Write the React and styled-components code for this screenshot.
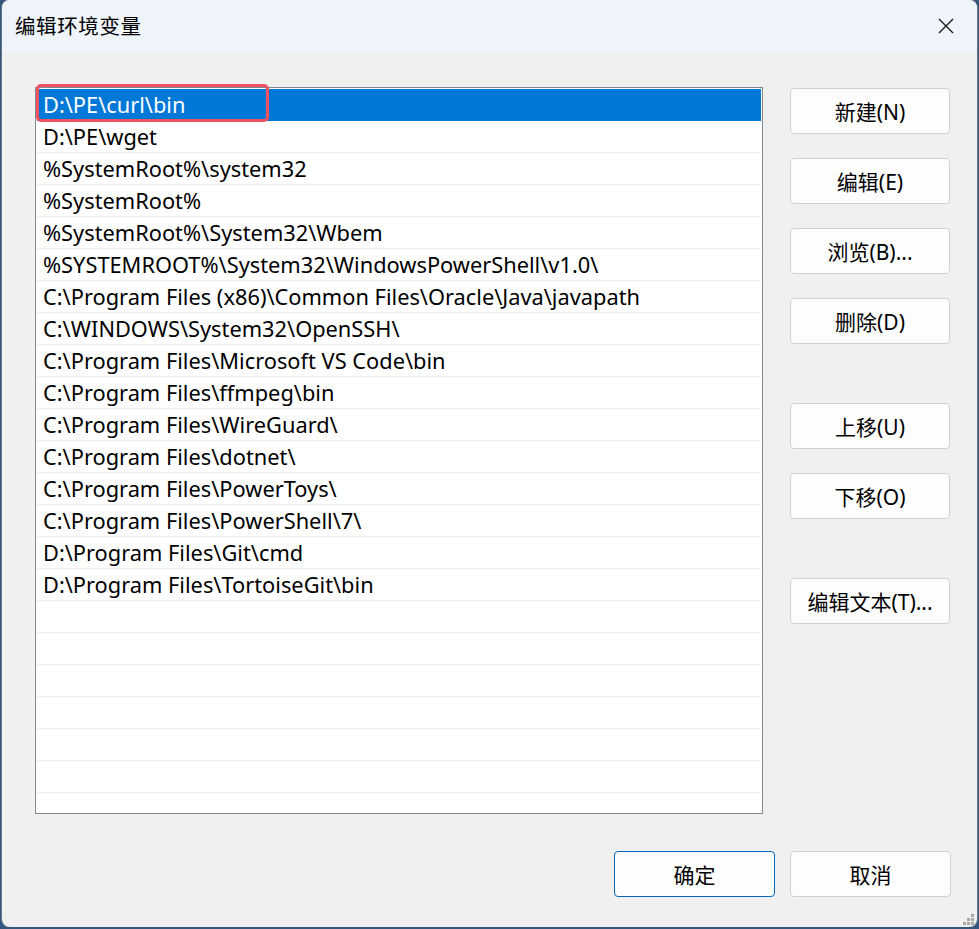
import React from "react";
import styled, { createGlobalStyle } from "styled-components";

const paths = [
  "D:\\PE\\curl\\bin",
  "D:\\PE\\wget",
  "%SystemRoot%\\system32",
  "%SystemRoot%",
  "%SystemRoot%\\System32\\Wbem",
  "%SYSTEMROOT%\\System32\\WindowsPowerShell\\v1.0\\",
  "C:\\Program Files (x86)\\Common Files\\Oracle\\Java\\javapath",
  "C:\\WINDOWS\\System32\\OpenSSH\\",
  "C:\\Program Files\\Microsoft VS Code\\bin",
  "C:\\Program Files\\ffmpeg\\bin",
  "C:\\Program Files\\WireGuard\\",
  "C:\\Program Files\\dotnet\\",
  "C:\\Program Files\\PowerToys\\",
  "C:\\Program Files\\PowerShell\\7\\",
  "D:\\Program Files\\Git\\cmd",
  "D:\\Program Files\\TortoiseGit\\bin",
];

const EMPTY_ROWS = 7;

const sideButtons = [
  { label: "新建(N)" },
  { label: "编辑(E)" },
  { label: "浏览(B)..." },
  { label: "删除(D)" },
  { label: "上移(U)", spaced: true },
  { label: "下移(O)" },
  { label: "编辑文本(T)...", spaced: true },
];

function App() {
  return (
    <>
      <GlobalStyle />
      <Window>
        <TitleBar>
          <Title>编辑环境变量</Title>
          <CloseButton>
            <svg width="16" height="16" viewBox="0 0 16 16">
              <path d="M1 1 L15 15 M15 1 L1 15" stroke="#1a1a1a" strokeWidth="1.4" />
            </svg>
          </CloseButton>
        </TitleBar>
        <Body>
          <Content>
            <ListWrap>
              <ListBox>
                {paths.map((p, i) => (
                  <Row key={p} selected={i === 0}>
                    {p}
                  </Row>
                ))}
                {Array.from({ length: EMPTY_ROWS }).map((_, i) => (
                  <Row key={"e" + i} />
                ))}
              </ListBox>
              <Highlight />
            </ListWrap>
            <SideColumn>
              {sideButtons.map((b) => (
                <SideButton key={b.label} spaced={b.spaced}>
                  {b.label}
                </SideButton>
              ))}
            </SideColumn>
          </Content>
          <Footer>
            <Button primary>确定</Button>
            <Button>取消</Button>
          </Footer>
        </Body>
        <Grip>
          <svg width="14" height="12" viewBox="0 0 14 12">
            {[
              [10, 0],
              [6, 4],
              [10, 4],
              [2, 8],
              [6, 8],
              [10, 8],
            ].map(([x, y]) => (
              <rect key={x + "-" + y} x={x} y={y} width="3" height="3" fill="#a8a8a8" />
            ))}
          </svg>
        </Grip>
      </Window>
    </>
  );
}

export default App;

const GlobalStyle = createGlobalStyle`
  html, body {
    margin: 0;
    padding: 0;
    background: #33577e;
  }
  body {
    font-family: "Noto Sans", "Noto Sans CJK SC", sans-serif;
    color: #000;
  }
`;

const Window = styled.div`
  position: relative;
  margin: 0 2px 0 2px;
  height: 927px;
  border-radius: 8px;
  overflow: hidden;
  background: #f0f0f0;
  display: flex;
  flex-direction: column;
  box-shadow: 0 0 0 1px #6b7686;
`;

const TitleBar = styled.div`
  height: 52px;
  flex-shrink: 0;
  background: #eff3fa;
  display: flex;
  align-items: center;
  justify-content: space-between;
  padding-left: 13px;
`;

const Title = styled.div`
  font-family: "Noto Sans CJK SC", sans-serif;
  font-size: 20.5px;
  letter-spacing: 0.6px;
  margin-top: -2px;
`;

const CloseButton = styled.div`
  width: 56px;
  height: 52px;
  display: flex;
  align-items: center;
  justify-content: center;
  margin-right: 3px;
`;

const Body = styled.div`
  flex: 1;
  display: flex;
  flex-direction: column;
  padding: 35px 26px 0 33px;
`;

const Content = styled.div`
  display: flex;
  gap: 27px;
`;

const ListWrap = styled.div`
  position: relative;
`;

const ListBox = styled.div`
  width: 728px;
  height: 727px;
  box-sizing: border-box;
  border: 1px solid #828790;
  background: #fff;
  overflow: hidden;
  padding: 1px 1px 0 1px;
`;

const Row = styled.div`
  height: 31px;
  border-bottom: 1px solid #ececec;
  display: flex;
  align-items: center;
  padding-left: 6px;
  font-size: 21.8px;
  white-space: nowrap;
  background: ${(p) => (p.selected ? "#0078d7" : "#fff")};
  color: ${(p) => (p.selected ? "#fff" : "#000")};
  border-bottom-color: ${(p) => (p.selected ? "#0078d7" : "#ececec")};
`;

const Highlight = styled.div`
  position: absolute;
  left: 1px;
  top: -3px;
  width: 233px;
  height: 38px;
  box-sizing: border-box;
  border: 3px solid #ee5162;
  border-radius: 5px;
  pointer-events: none;
`;

const SideColumn = styled.div`
  display: flex;
  flex-direction: column;
  gap: 24px;
  padding-top: 1px;
`;

const Button = styled.div`
  width: 161px;
  height: 46px;
  box-sizing: border-box;
  border: ${(p) => (p.primary ? "1.5px solid #0067c0" : "1px solid #d0d0d0")};
  border-radius: 4px;
  background: #fdfdfd;
  display: flex;
  align-items: center;
  justify-content: center;
  font-size: 21px;
`;

const SideButton = styled(Button)`
  width: 160px;
  margin-top: ${(p) => (p.spaced ? "35px" : "0")};
`;

const Footer = styled.div`
  display: flex;
  justify-content: flex-end;
  gap: 15px;
  margin-top: 37px;
`;

const Grip = styled.div`
  position: absolute;
  right: 2px;
  bottom: 1px;
  line-height: 0;
`;
